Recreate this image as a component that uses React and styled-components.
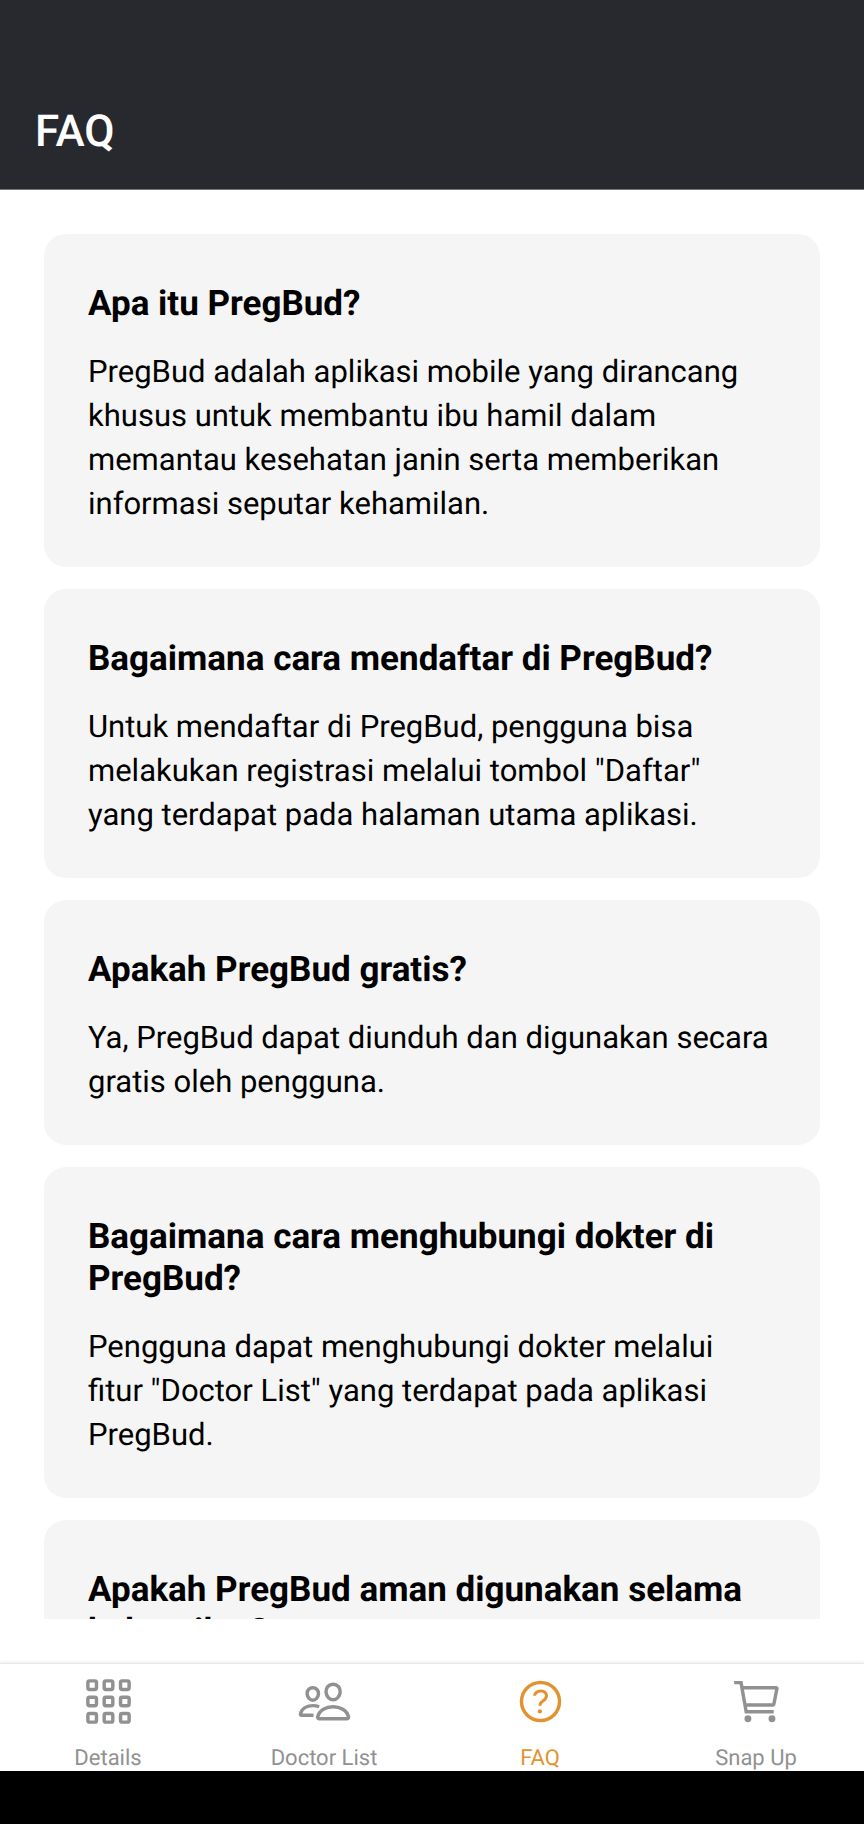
import React from "react";
import styled, { createGlobalStyle } from "styled-components";

const GlobalStyle = createGlobalStyle`
  * { box-sizing: border-box; }
  body {
    margin: 0;
    background: #ffffff;
    color: #000000;
    font-family: Roboto, "Liberation Sans", sans-serif;
    text-rendering: geometricPrecision;
  }
`;

const Screen = styled.div`
  display: flex;
  flex-direction: column;
  height: 100vh;
`;

const Header = styled.header`
  flex: none;
  padding: 105px 35px 32px;
  background: #28292e;
  border-bottom: 1px solid #77787b;
`;

const Title = styled.h1`
  margin: 0;
  font-size: 44px;
  line-height: 52px;
  font-weight: 500;
  color: #ffffff;
`;

const Content = styled.main`
  flex: 1;
  min-height: 0;
  display: flex;
  padding: 44px;
`;

const FaqList = styled.div`
  flex: 1;
  overflow-y: auto;
  scrollbar-width: none;
  display: flex;
  flex-direction: column;
  gap: 22px;
`;

const Card = styled.article`
  flex: none;
  display: flex;
  flex-direction: column;
  gap: 25px;
  padding: 49px 44px 41px;
  border-radius: 22px;
  background: #f5f5f5;
`;

const Question = styled.h2`
  margin: 0;
  font-size: 35px;
  line-height: 42px;
  font-weight: 700;
`;

const Answer = styled.p`
  margin: 0;
  font-size: 31px;
  line-height: 44px;
  white-space: pre-line;
`;

const TabBar = styled.nav`
  flex: none;
  display: grid;
  grid-template-columns: repeat(4, 1fr);
  padding-top: 10px;
  background: #ffffff;
  border-top: 1px solid #e8e8e8;
  box-shadow: 0 -1px 3px rgba(0, 0, 0, 0.08);
`;

const Tab = styled.a`
  display: flex;
  flex-direction: column;
  align-items: center;
  gap: 18px;
  font-size: 22px;
  line-height: 24px;
  text-decoration: none;
  color: ${({ $active }) => ($active ? "#e29331" : "#919191")};
`;

const TabIcon = styled.svg.attrs({ viewBox: "0 0 512 512", "aria-hidden": true })`
  width: 55px;
  height: 55px;
  fill: none;
  stroke: currentColor;
  stroke-width: 32px;

  .dot {
    fill: currentColor;
    stroke: none;
  }
`;

const SystemBar = styled.footer`
  flex: none;
  height: 53px;
  background: #000000;
`;

const GridIcon = () => (
  <TabIcon>
    {[64, 216, 368].map((y) =>
      [64, 216, 368].map((x) => (
        <rect key={`${x}-${y}`} x={x} y={y} width="80" height="80" rx="16" />
      ))
    )}
  </TabIcon>
);

const PeopleIcon = () => (
  <TabIcon>
    <path d="M402 168c-2.93 40.67-33.1 72-66 72s-63.12-31.32-66-72c-3-42.31 26.37-72 66-72s69 30.46 66 72z" />
    <path d="M336 304c-65.17 0-127.84 32.37-143.54 95.41-2.08 8.34 3.15 16.59 11.72 16.59h263.65c8.57 0 13.77-8.25 11.72-16.59C463.85 335.36 401.18 304 336 304z" />
    <path d="M200 185.94c-2.34 32.48-26.72 58.06-53 58.06s-50.7-25.57-53-58.06C91.61 152.15 115.34 128 147 128s55.39 24.77 53 57.94z" />
    <path d="M206 306c-18.05-8.27-37.93-11.45-59-11.45-52 0-102.1 25.85-114.65 76.2-1.65 6.66 2.53 13.25 9.37 13.25H154" />
  </TabIcon>
);

const HelpIcon = () => (
  <TabIcon>
    <circle cx="256" cy="256" r="177" />
    <path
      strokeWidth="28"
      d="M200 202.29s.84-17.5 19.57-32.57C230.68 160.77 244 158.18 256 158c10.93-.14 20.69 1.67 26.53 4.45 10 4.76 29.47 16.38 29.47 41.09 0 26-17 37.81-36.37 50.8S251 281.43 251 296"
    />
    <circle className="dot" cx="250" cy="348" r="20" />
  </TabIcon>
);

const CartIcon = () => (
  <TabIcon>
    <circle className="dot" cx="176" cy="416" r="32" />
    <circle className="dot" cx="400" cy="416" r="32" />
    <path d="M48 80h64l48 272h256" />
    <path d="M160 288h249.44a8 8 0 0 0 7.85-6.43l28.8-144a8 8 0 0 0-7.85-9.57H128" />
  </TabIcon>
);

const faqs = [
  {
    question: "Apa itu PregBud?",
    answer:
      "PregBud adalah aplikasi mobile yang dirancang khusus untuk membantu ibu hamil dalam memantau kesehatan janin serta memberikan informasi seputar kehamilan.",
  },
  {
    question: "Bagaimana cara mendaftar di PregBud?",
    answer:
      'Untuk mendaftar di PregBud, pengguna bisa melakukan registrasi melalui tombol "Daftar"\nyang terdapat pada halaman utama aplikasi.',
  },
  {
    question: "Apakah PregBud gratis?",
    answer:
      "Ya, PregBud dapat diunduh dan digunakan secara gratis oleh pengguna.",
  },
  {
    question: "Bagaimana cara menghubungi dokter di PregBud?",
    answer:
      'Pengguna dapat menghubungi dokter melalui\nfitur "Doctor List" yang terdapat pada aplikasi PregBud.',
  },
  {
    question: "Apakah PregBud aman digunakan selama kehamilan?",
  },
];

const tabs = [
  { id: "details", label: "Details", Icon: GridIcon },
  { id: "doctors", label: "Doctor List", Icon: PeopleIcon },
  { id: "faq", label: "FAQ", Icon: HelpIcon },
  { id: "snap", label: "Snap Up", Icon: CartIcon },
];

export default function App() {
  return (
    <>
      <GlobalStyle />
      <Screen>
        <Header>
          <Title>FAQ</Title>
        </Header>
        <Content>
          <FaqList>
            {faqs.map(({ question, answer }) => (
              <Card key={question}>
                <Question>{question}</Question>
                {answer && <Answer>{answer}</Answer>}
              </Card>
            ))}
          </FaqList>
        </Content>
        <TabBar>
          {tabs.map(({ id, label, Icon }) => (
            <Tab
              key={id}
              href={`#${id}`}
              $active={id === "faq"}
              aria-current={id === "faq" ? "page" : undefined}
            >
              <Icon />
              {label}
            </Tab>
          ))}
        </TabBar>
        <SystemBar />
      </Screen>
    </>
  );
}
